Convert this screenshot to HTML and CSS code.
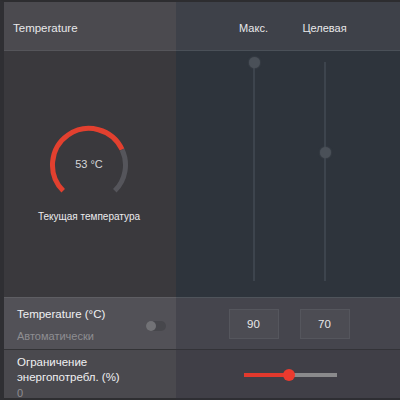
FILE: index.html
```html
<!DOCTYPE html>
<html lang="ru">
<head>
    <meta charset="UTF-8">
    <meta name="viewport" content="width=device-width, initial-scale=1.0">
    <title>Temperature</title>
    <link rel="stylesheet" href="styles.css">
</head>
<body>
    <div class="panel">
        <div class="cell head-left">
            <span class="titolo">Temperature</span>
        </div>
        <div class="cell head-right pair">
            <span class="col-label">Макс.</span>
            <span class="col-label">Целевая</span>
        </div>

        <div class="cell body-left">
            <div class="gauge">
                <svg width="80" height="80" viewBox="0 0 80 80">
                    <path d="M14.2 65.8 A36.5 36.5 0 1 1 73.08 24.57" fill="none" stroke="#e2402f" stroke-width="5"/>
                    <path d="M73.08 24.57 A36.5 36.5 0 0 1 65.8 65.8" fill="none" stroke="#55555b" stroke-width="5"/>
                </svg>
                <span class="gauge-value">53 °C</span>
            </div>
            <span class="gauge-caption">Текущая температура</span>
        </div>
        <div class="cell body-right pair">
            <div class="vslider">
                <div class="vtrack"></div>
                <div class="vknob" style="top: 0%"></div>
            </div>
            <div class="vslider">
                <div class="vtrack"></div>
                <div class="vknob" style="top: 41%"></div>
            </div>
        </div>

        <div class="cell row1-left">
            <div class="labels">
                <span class="nome">Temperature (°C)</span>
                <span class="sub">Автоматически</span>
            </div>
            <div class="toggle"><div class="toggle-knob"></div></div>
        </div>
        <div class="cell row1-right pair">
            <div class="valore"><span>90</span></div>
            <div class="valore"><span>70</span></div>
        </div>

        <div class="cell row2-left">
            <span class="nome">Ограничение<br>энергопотребл. (%)</span>
            <span class="sub">0</span>
        </div>
        <div class="cell row2-right">
            <div class="hslider">
                <div class="hfill" style="width: 48%"></div>
                <div class="hknob" style="left: 48%"></div>
            </div>
        </div>
    </div>
</body>
</html>
```

FILE: styles.css
```css
* {
    box-sizing: border-box;
    margin: 0;
    padding: 0;
}

body {
    font-family: 'Liberation Sans', Arial, sans-serif;
    background: #2c2c2f;
    color: #e8e8ea;
    width: 400px;
    height: 400px;
    overflow: hidden;
}

.panel {
    display: grid;
    grid-template-columns: 172px 224px;
    grid-template-rows: 49px 246px 53px 50px;
    height: 400px;
    border-top: 2px solid #2d2d30;
    border-left: 4px solid #2f2f33;
}

.cell {
    display: flex;
}

.pair {
    padding-left: 42px;
}

.pair > * {
    width: 71px;
}

/* intestazione */
.head-left {
    background: #4b4a4f;
    align-items: center;
    padding: 3px 0 0 9px;
    border-bottom: 1px solid #55555a;
}

.titolo {
    font-size: 11.5px;
}

.head-right {
    background: #3e4149;
    align-items: center;
    padding-top: 3px;
    border-bottom: 1px solid #4a5058;
}

.col-label {
    font-size: 11px;
    text-align: center;
}

/* corpo */
.body-left {
    background: #3a393d;
    flex-direction: column;
    align-items: center;
    padding-top: 74px;
    padding-right: 2px;
}

.gauge {
    position: relative;
    width: 80px;
    height: 80px;
}

.gauge svg {
    display: block;
}

.gauge-value {
    position: absolute;
    left: 0;
    right: 0;
    top: 33px;
    text-align: center;
    font-size: 11px;
    color: #d6d6d8;
}

.gauge-caption {
    margin-top: 6px;
    font-size: 10px;
    color: #ececee;
}

.body-right {
    background: #2e343c;
    padding-top: 11px;
    padding-bottom: 15px;
}

.vslider {
    position: relative;
    height: 219px;
    display: flex;
    justify-content: center;
}

.vtrack {
    width: 2px;
    height: 100%;
    background: #3d444d;
}

.vknob {
    position: absolute;
    left: 50%;
    width: 11px;
    height: 11px;
    margin: -5px 0 0 -5px;
    border-radius: 50%;
    background: #4a5058;
    box-shadow: 0 0 2px #4a5058;
}

/* riga temperatura */
.row1-left {
    background: #525157;
    border-top: 1px solid #5e5e63;
    border-bottom: 1px solid #333336;
    align-items: center;
    justify-content: space-between;
    padding: 2px 10px 0 13px;
}

.labels {
    display: flex;
    flex-direction: column;
    gap: 8px;
}

.nome {
    font-size: 11.5px;
    line-height: 15px;
    color: #f0f0f2;
}

.sub {
    font-size: 11px;
    color: #8e8e92;
}

.toggle {
    width: 20px;
    height: 10px;
    border-radius: 5px;
    background: #47474c;
    margin-top: 3px;
}

.toggle-knob {
    width: 10px;
    height: 10px;
    border-radius: 50%;
    background: #727276;
}

.row1-right {
    background: #45454d;
    border-top: 1px solid #4f545b;
    border-bottom: 1px solid #333338;
    align-items: center;
}

.valore {
    display: flex;
    justify-content: center;
}

.valore span {
    width: 50px;
    height: 30px;
    display: flex;
    align-items: center;
    justify-content: center;
    background: #4c4c53;
    border: 1px solid #55565d;
    font-size: 11.5px;
}

/* riga energia */
.row2-left {
    background: #4a494e;
    flex-direction: column;
    padding: 5px 0 0 13px;
    gap: 2px;
    border-bottom: 2px solid #2e2e31;
}

.row2-right {
    background: #403f47;
    align-items: center;
    padding-left: 68px;
    border-bottom: 2px solid #2e2e33;
}

.hslider {
    position: relative;
    width: 93px;
    height: 4px;
    background: #8a8a8c;
    margin-top: 2px;
}

.hfill {
    height: 100%;
    background: #e2392d;
}

.hknob {
    position: absolute;
    top: -4px;
    width: 12px;
    height: 12px;
    margin-left: -6px;
    border-radius: 50%;
    background: #ec3a2e;
}
```
